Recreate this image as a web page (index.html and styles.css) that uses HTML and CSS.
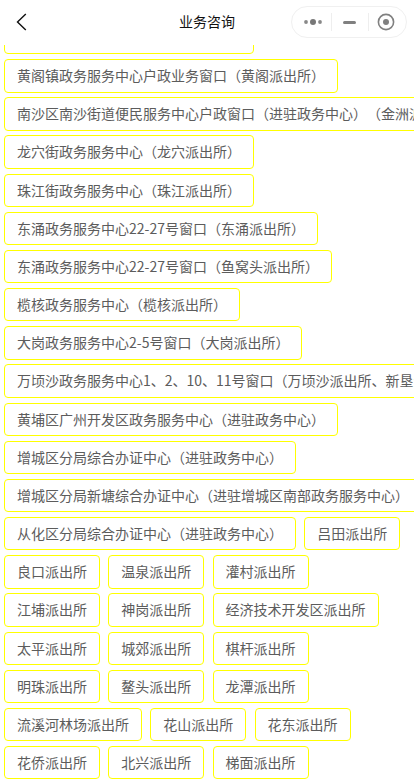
FILE: index.html
```html
<!DOCTYPE html>
<html lang="zh-CN">
<head>
    <meta charset="UTF-8">
    <meta name="viewport" content="width=device-width, initial-scale=1.0">
    <title>业务咨询</title>
    <link rel="stylesheet" href="styles.css">
</head>
<body>
    <div class="navbar">
        <button class="back" aria-label="返回">
            <svg width="11" height="18" viewBox="0 0 11 18"><path d="M9.8 1 L1.5 9 L9.8 17" fill="none" stroke="#111" stroke-width="1.4"/></svg>
        </button>
        <div class="title">业务咨询</div>
        <div class="capsule">
            <svg class="more" width="20" height="8" viewBox="0 0 20 8"><circle cx="3" cy="4" r="1.9" fill="#888"/><circle cx="10" cy="4" r="3" fill="#777"/><circle cx="17" cy="4" r="1.9" fill="#888"/></svg>
            <span class="line"></span>
            <span class="minus"></span>
            <span class="line"></span>
            <svg class="target" width="18" height="18" viewBox="0 0 18 18"><circle cx="9" cy="9" r="7.6" fill="none" stroke="#808080" stroke-width="1.6"/><circle cx="9" cy="9" r="3" fill="#808080"/></svg>
        </div>
    </div>
    <div class="content">
        <div class="list">
            <div class="row"><span class="item">石楼镇政务服务中心（石楼派出所）</span></div>
            <div class="row"><span class="item">黄阁镇政务服务中心户政业务窗口（黄阁派出所）</span></div>
            <div class="row"><span class="item">南沙区南沙街道便民服务中心户政窗口（进驻政务中心）（金洲派出所）</span></div>
            <div class="row"><span class="item">龙穴街政务服务中心（龙穴派出所）</span></div>
            <div class="row"><span class="item">珠江街政务服务中心（珠江派出所）</span></div>
            <div class="row"><span class="item">东涌政务服务中心22-27号窗口（东涌派出所）</span></div>
            <div class="row"><span class="item">东涌政务服务中心22-27号窗口（鱼窝头派出所）</span></div>
            <div class="row"><span class="item">榄核政务服务中心（榄核派出所）</span></div>
            <div class="row"><span class="item">大岗政务服务中心2-5号窗口（大岗派出所）</span></div>
            <div class="row"><span class="item">万顷沙政务服务中心1、2、10、11号窗口（万顷沙派出所、新垦派出所）</span></div>
            <div class="row"><span class="item">黄埔区广州开发区政务服务中心（进驻政务中心）</span></div>
            <div class="row"><span class="item">增城区分局综合办证中心（进驻政务中心）</span></div>
            <div class="row"><span class="item">增城区分局新塘综合办证中心（进驻增城区南部政务服务中心）</span></div>
            <div class="row"><span class="item">从化区分局综合办证中心（进驻政务中心）</span><span class="item">吕田派出所</span></div>
            <div class="row"><span class="item">良口派出所</span><span class="item">温泉派出所</span><span class="item">灌村派出所</span></div>
            <div class="row"><span class="item">江埔派出所</span><span class="item">神岗派出所</span><span class="item">经济技术开发区派出所</span></div>
            <div class="row"><span class="item">太平派出所</span><span class="item">城郊派出所</span><span class="item">棋杆派出所</span></div>
            <div class="row"><span class="item">明珠派出所</span><span class="item">鳌头派出所</span><span class="item">龙潭派出所</span></div>
            <div class="row"><span class="item">流溪河林场派出所</span><span class="item">花山派出所</span><span class="item">花东派出所</span></div>
            <div class="row"><span class="item">花侨派出所</span><span class="item">北兴派出所</span><span class="item">梯面派出所</span></div>
        </div>
    </div>
</body>
</html>
```

FILE: styles.css
```css
* {
    box-sizing: border-box;
}

html, body {
    height: 100%;
}

body {
    margin: 0;
    display: flex;
    flex-direction: column;
    overflow: hidden;
    background-color: #fff;
    font-family: "Noto Sans CJK SC", "Liberation Sans", sans-serif;
    text-spacing-trim: space-all;
}

/* Nav bar */
.navbar {
    position: relative;
    flex: none;
    height: 45px;
    display: flex;
    align-items: center;
    justify-content: space-between;
    padding: 0 7px 1px 16px;
    background-color: #fff;
}

.back {
    display: flex;
    padding: 0;
    border: none;
    background: none;
}

.title {
    position: absolute;
    left: 0;
    right: 0;
    padding-bottom: 3px;
    text-align: center;
    font-size: 14px;
    color: #111;
}

.capsule {
    position: relative;
    display: flex;
    align-items: center;
    width: 116px;
    height: 32px;
    padding: 0 0 0 11px;
    border: 1px solid #f0f0f0;
    border-radius: 16px;
    background-color: #fff;
}

.line {
    width: 1px;
    height: 18px;
    background-color: #eee;
}

.more {
    margin-right: 8px;
}

.minus {
    width: 13px;
    height: 3px;
    margin: 0 12px 0 11px;
    border-radius: 2px;
    background-color: #808080;
}

.target {
    margin-left: 8px;
}

/* Station list */
.content {
    flex: 1;
    min-height: 0;
    overflow: hidden;
}

.list {
    margin-top: -24px;
    padding-left: 4px;
}

.row {
    display: flex;
    gap: 8.3px;
    height: 33.4px;
    margin-bottom: 4.77px;
}

.item {
    flex: none;
    height: 100%;
    padding: 0 12px;
    border: 1px solid #ff0;
    border-radius: 4px;
    font-size: 14px;
    line-height: 31.4px;
    color: #5c5c5c;
    white-space: nowrap;
}
```
